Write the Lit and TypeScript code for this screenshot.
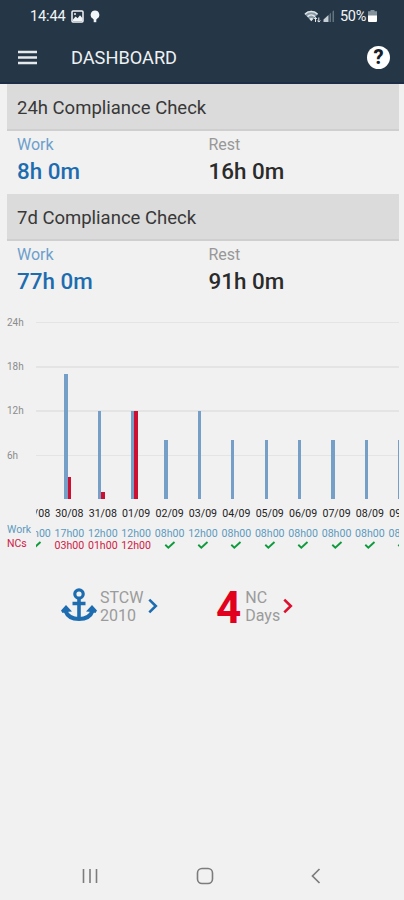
import { LitElement, html, css, svg, nothing } from "lit";
import { customElement, property } from "lit/decorators.js";

interface Day {
  date: string;
  work: number;
  nc: number;
}

const DAYS: Day[] = [
  { date: "29/08", work: 0, nc: 0 },
  { date: "30/08", work: 17, nc: 3 },
  { date: "31/08", work: 12, nc: 1 },
  { date: "01/09", work: 12, nc: 12 },
  { date: "02/09", work: 8, nc: 0 },
  { date: "03/09", work: 12, nc: 0 },
  { date: "04/09", work: 8, nc: 0 },
  { date: "05/09", work: 8, nc: 0 },
  { date: "06/09", work: 8, nc: 0 },
  { date: "07/09", work: 8, nc: 0 },
  { date: "08/09", work: 8, nc: 0 },
  { date: "09/09", work: 8, nc: 0 },
];

const PX_PER_HOUR = 7.36;
const hours = (n: number) => `${String(n).padStart(2, "0")}h00`;

@customElement("status-bar")
class StatusBar extends LitElement {
  static styles = css`
    :host { display: flex; height: 32px; padding: 0 27px 0 30px; align-items: center; justify-content: space-between; color: #f2f5f7; font-size: 14.5px; }
    .group { display: flex; align-items: center; }
    .time { width: 41px; letter-spacing: -0.1px; }
    .bulb { margin-left: 6px; }
    .signal { margin: 0 5px 0 2px; }
    .pct { font-size: 14.5px; letter-spacing: -0.3px; }
    .batt { margin-left: 2px; }
    svg { display: block; }
  `;
  render() {
    return html`
      <div class="group">
        <span class="time">14:44</span>
        <svg width="13" height="13" viewBox="0 0 13 13">
          <rect x="1" y="1" width="11" height="11" rx="1" fill="none" stroke="#f2f5f7" stroke-width="1.5" />
          <path d="M2 9.5l2.6-3 2 1.8L9 5.2l2.5 3V11H2z" fill="#f2f5f7" />
          <circle cx="4" cy="4" r="1" fill="#f2f5f7" />
        </svg>
        <svg class="bulb" width="10" height="13" viewBox="0 0 10 13">
          <path d="M5 .5a4.4 4.4 0 0 0-2.3 8.1L4 10h2l1.3-1.4A4.4 4.4 0 0 0 5 .5z" fill="#f2f5f7" />
          <path d="M3.7 10h2.6v2.2H3.7z" fill="#f2f5f7" />
        </svg>
      </div>
      <div class="group">
        <svg width="17" height="13" viewBox="0 0 17 13">
          <path d="M.5 4C4-.2 10.5-.2 14 4L7.3 11z" fill="#8799a5" />
          <path d="M1 4.2C4.3.7 10.2.7 13.5 4.2M3.5 6.6c2.2-2.1 5.300-2.1 7.5 0" fill="none" stroke="#e2e7ea" stroke-width="1.5" />
          <path d="M7.3 11.2l-2-2.4q2-1.5 4 0z" fill="#e2e7ea" />
          <path d="M11.5 12V7.5M10 9l1.5-1.7L13 9M14.8 7.5V12M13.3 10.5l1.5 1.6 1.5-1.6" fill="none" stroke="#e2e7ea" stroke-width="1" />
        </svg>
        <svg class="signal" width="12" height="12" viewBox="0 0 12 12">
          <path d="M.5 12V9.5L5.5 5v7z" fill="#c5ced4" />
          <path d="M6.5 12V4L8 2.8V12zM9.5 12V1.5L11 .2V12z" fill="#63747f" />
        </svg>
        <span class="pct">50%</span>
        <svg class="batt" width="9" height="12" viewBox="0 0 9 12">
          <path d="M2.5 0h4v1.2H9V6H0V1.2h2.5z" fill="#84929c" />
          <path d="M0 5.5h9V11a1 1 0 0 1-1 1H1a1 1 0 0 1-1-1z" fill="#fff" />
        </svg>
      </div>
    `;
  }
}

@customElement("compliance-block")
class ComplianceBlock extends LitElement {
  @property() heading = "";
  @property() work = "";
  @property() rest = "";

  static styles = css`
    :host { display: block; height: 110px; }
    .head { box-sizing: border-box; height: 47px; padding: 0 10px; border-bottom: 2px solid #cfcfcf; background: #dbdbdb; color: #383838; font-size: 18.5px; line-height: 48px; }
    .cells { display: grid; grid-template-columns: 191.5px 1fr; padding: 3px 10px 0; }
    .label { font-size: 16px; line-height: 21px; color: #989898; }
    .value { font-size: 22.4px; line-height: 33px; color: #2b2b2b; font-weight: 500; }
    .blue.label { color: #6d9fcc; }
    .blue.value { color: #1d6cb0; }
  `;
  render() {
    return html`
      <div class="head">${this.heading}</div>
      <div class="cells">
        <div class="label blue">Work</div>
        <div class="label">Rest</div>
        <div class="value blue">${this.work}</div>
        <div class="value">${this.rest}</div>
      </div>
    `;
  }
}

@customElement("hours-chart")
class HoursChart extends LitElement {
  static styles = css`
    :host { display: grid; grid-template-columns: 29px 363px; height: 235px; margin-top: 12px; font-size: 10px; }
    .axis { display: flex; flex-direction: column; padding-top: 1px; color: #8c8c8c; }
    .tick { flex: none; height: 44.2px; line-height: 12px; }
    .rowlabel { font-size: 10.5px; line-height: 14px; color: #5c9abf; }
    .first { margin-top: 29px; }
    .rowlabel.nc { color: #cf2045; }
    .plot { overflow: hidden; background: repeating-linear-gradient(#e4e4e4 0 1.5px, transparent 1.5px 44.2px) 0 6px / 100% 134.5px no-repeat; }
    .days { display: flex; width: 402px; margin-left: -16.7px; }
    .day { flex: 0 0 33.4px; display: flex; flex-direction: column; align-items: center; }
    .bars { display: flex; align-items: flex-end; height: 183px; width: 33.4px; }
    .bar { width: 3.3px; margin-left: 11.5px; background: #769fc8; }
    .bar.nc { width: 3.8px; margin-left: 0; background: #cc1033; }
    .date { margin-top: 7px; line-height: 15px; color: #222; font-size: 10.6px; }
    .work { margin-top: 6px; line-height: 13px; color: #5c9abf; font-size: 10.6px; }
    .ncs { height: 12px; line-height: 12px; color: #cf2045; font-size: 10.6px; }
    .ncs svg { display: block; margin-top: 1px; }
  `;
  render() {
    return html`
      <div class="axis">
        ${["24h", "18h", "12h", "6h"].map((t) => html`<div class="tick">${t}</div>`)}
        <div class="rowlabel first">Work</div>
        <div class="rowlabel nc">NCs</div>
      </div>
      <div class="plot">
        <div class="days">
          ${DAYS.map(
            (d) => html`<div class="day">
              <div class="bars">
                <div class="bar" style="height:${d.work * PX_PER_HOUR}px"></div>
                ${d.nc ? html`<div class="bar nc" style="height:${d.nc * PX_PER_HOUR}px"></div>` : nothing}
              </div>
              <div class="date">${d.date}</div>
              <div class="work">${hours(d.work)}</div>
              <div class="ncs">
                ${d.nc
                  ? hours(d.nc)
                  : html`<svg width="12" height="8" viewBox="0 0 12 8">
                      <path d="M1.3 3.800L4.3 6.7 10.5 1" fill="none" stroke="#109a3e" stroke-width="1.9" />
                    </svg>`}
              </div>
            </div>`
          )}
        </div>
      </div>
    `;
  }
}

const chevron = (color: string) => html`<svg class="chev" width="10" height="16" viewBox="0 0 10 16">
  ${svg`<path d="M1.3 1.6L7.8 8 1.3 14.4" fill="none" stroke=${color} stroke-width="2.6" />`}
</svg>`;

@customElement("app-root")
class AppRoot extends LitElement {
  static styles = css`
    :host { display: flex; flex-direction: column; box-sizing: border-box; width: 404px; height: 900px; overflow: hidden; background: #f1f1f1; font-family: Roboto, "Liberation Sans", sans-serif; }
    .top { flex: none; box-sizing: border-box; height: 84px; background: #253746; border-bottom: 2px solid #1d2c47; }
    .bar { display: flex; align-items: center; height: 50px; padding: 0 14px 0 18px; }
    .title { flex: 1; margin-left: 34px; color: #eef1f3; font-size: 18.2px; }
    .help { display: flex; align-items: center; justify-content: center; width: 23px; height: 23px; border-radius: 50%; background: #fff; color: #17202a; font-size: 20px; font-weight: 800; }
    .main { flex: 1; padding: 0 5px 0 7px; }
    .links { display: flex; align-items: center; height: 40px; margin-top: 35px; padding-left: 54px; }
    .link { display: flex; align-items: center; width: 155px; }
    .anchor { margin-top: -2px; }
    .text { width: 48px; margin: 2px 0 0 3px; color: #9b9b9b; font-size: 16px; line-height: 18.5px; }
    .link.days .text { width: 38px; margin-left: 4px; }
    .four { margin-top: 4px; color: #e2001f; font-size: 44px; line-height: 40px; font-weight: 700; }
    .nav { display: flex; align-items: center; justify-content: space-between; height: 48px; padding: 0 83px 0 82px; }
    svg { display: block; }
  `;
  render() {
    return html`
      <div class="top">
        <status-bar></status-bar>
        <div class="bar">
          <svg width="19" height="15" viewBox="0 0 19 15">
            <path d="M0 2h19M0 7.5h19M0 13h19" stroke="#e6e9eb" stroke-width="2.3" />
          </svg>
          <div class="title">DASHBOARD</div>
          <div class="help">?</div>
        </div>
      </div>
      <div class="main">
        <compliance-block heading="24h Compliance Check" work="8h 0m" rest="16h 0m"></compliance-block>
        <compliance-block heading="7d Compliance Check" work="77h 0m" rest="91h 0m"></compliance-block>
        <hours-chart></hours-chart>
        <div class="links">
          <div class="link">
            <svg class="anchor" width="36" height="34" viewBox="0 0 36 34">
              <g fill="none" stroke="#1d6cb0">
                <circle cx="18" cy="6" r="4.2" stroke-width="3.2" />
                <path d="M18 10v20M11.5 15.5h13" stroke-width="3.6" />
                <path d="M4.5 23c2 5.5 7.5 8 13.5 8s11.5-2.5 13.5-8" stroke-width="4" />
              </g>
              <path d="M0 22.5L5 17l6 6.5-5.5.5-4 1zM36 22.5L31 17l-6 6.5 5.5.5 4 1z" fill="#1d6cb0" />
            </svg>
            <div class="text">STCW 2010</div>
            ${chevron("#1d6cb0")}
          </div>
          <div class="link days">
            <div class="four">4</div>
            <div class="text">NC<br />Days</div>
            ${chevron("#dc0f2f")}
          </div>
        </div>
      </div>
      <div class="nav">
        <svg width="16" height="16" viewBox="0 0 16 16">
          <path d="M1.5 1v14M8 1v14M14.5 1v14" stroke="#7c7c7c" stroke-width="1.6" />
        </svg>
        <svg width="18" height="18" viewBox="0 0 18 18">
          <rect x="1.5" y="1.5" width="15" height="15" rx="4.5" fill="none" stroke="#7c7c7c" stroke-width="1.6" />
        </svg>
        <svg width="10" height="16" viewBox="0 0 10 16">
          <path d="M8.5 1L1.5 8l7 7" fill="none" stroke="#7c7c7c" stroke-width="1.7" />
        </svg>
      </div>
    `;
  }
}
